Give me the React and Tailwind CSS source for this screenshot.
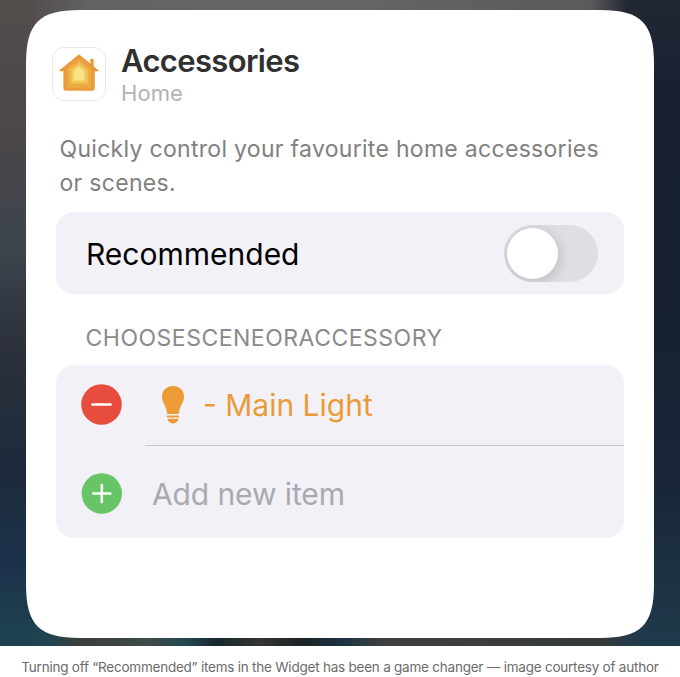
function HomeIcon() {
  return (
    <div className="flex h-[54px] w-[54px] shrink-0 items-center justify-center rounded-[12px] border border-[#e8e8ea] bg-white">
      <svg width="40" height="40" viewBox="0 0 40 40">
        <path d="M18.800 1.200Q20 0 21.200 1.200L31.300 9.500V5.800Q31.300 4.800 32.300 4.800h1.400Q34.700 4.800 34.700 5.800v6.600l4.800 3.800Q40.300 17.200 39 17.200H35.800V34Q35.800 36.800 33 36.800H7.200Q4.400 36.800 4.400 34V17.200H1Q-.3 17.200.5 16.200Z" fill="#ea9a3a" />
        <path d="M20 4.800 32 14.500V32.200Q32 33.700 30.500 33.700H9.500Q8 33.700 8 32.200V14.500Z" fill="#eeaa42" />
        <path d="M20 8 29 15.500V30H11V15.500Z" fill="#f1bd50" />
        <path d="M20 10 27 16V28H13V16Z" fill="#f3cc60" />
        <path d="M20 12.500 25 17V26.500H15V17Z" fill="#f8e484" />
      </svg>
    </div>
  );
}

function Bulb() {
  return (
    <svg width="24" height="40" viewBox="0 0 24 40" fill="#ec9b35">
      <path d="M12 1C5.500 1 1 5.500 1 11.500c0 7 4.500 9 5 16.500q.1 1 1 1h10q.9 0 1-1c.5-7.500 5-9.500 5-16.500C23 5.500 18.500 1 12 1Z" />
      <rect x="5.800" y="30.500" width="12.400" height="2" rx="1" />
      <path d="M6.500 33.800h11Q17.300 36 16 36.500 14.500 38.500 12 38.500T8 36.500Q6.700 36 6.500 33.800Z" />
    </svg>
  );
}

export default function App() {
  return (
    <div className="h-[677px] w-[680px] overflow-hidden bg-white font-['Inter','Liberation_Sans',sans-serif]">
      <div className="h-[646px] bg-[linear-gradient(#534d4b_0px,#4b4649_130px,#3c444c_250px,#2b303b_350px,#1d2a3b_470px,#1b314a_560px,#1f4351_646px),linear-gradient(#222734_0px,#171f30_100px,#16202f_300px,#182637_480px,#1f3a4c_646px),linear-gradient(90deg,#534d4b_30px,#626262_90px,#666_320px,#5a5a5a_590px,#222734_628px),linear-gradient(90deg,#1f4351_45px,#3b3f3c_80px,#3f4a4a_150px,#224852_185px,#18272a_217px,#353433_260px,#1a2224_304px,#1b3444_343px,#3f403f_385px,#353a39_600px,#1f3a4c_640px)] bg-[size:34px_646px,34px_646px,680px_323px,680px_323px] bg-[position:0_0,646px_0,0_0,0_323px] bg-no-repeat px-[26px] pt-[10px]">
        <main className="flex h-[628px] w-[628px] flex-col bg-white px-[30px] [clip-path:path('M54_0H574C615_0_628_13_628_54V574C628_615_615_628_574_628H54C13_628_0_615_0_574V54C0_13_13_0_54_0Z')]">
          <header className="-ml-1 mt-[37px] flex h-[54px] gap-[15px]">
            <HomeIcon />
            <div>
              <h1 className="mt-[-6px] text-[31px] font-semibold leading-[40px] tracking-[-0.65px] text-[#303030]">Accessories</h1>
              <p className="mt-[-1px] text-[22px] leading-[26px] tracking-[0.1px] text-[#b3b3b3]">Home</p>
            </div>
          </header>
          <p className="ml-[3.500px] mt-[31px] h-[79px] whitespace-nowrap text-[23px] leading-[34px] tracking-[0.300px] text-[#808080]">
            Quickly control your favourite home accessories<br />or scenes.
          </p>
          <section className="mt-[1px] flex h-[82px] shrink-0 items-center justify-between rounded-[18px] bg-[#f2f1f8] pl-[30px] pr-[26px]">
            <span className="mt-[2px] text-[30px] leading-[40px] text-black">Recommended</span>
            <button className="flex h-[57px] w-[94px] items-center overflow-hidden rounded-full bg-[#dfdee3] pl-[3px]">
              <span className="h-[51px] w-[51px] rounded-full bg-white shadow-[1px_3px_10px_3px_rgba(0,0,0,0.11)]" />
            </button>
          </section>
          <h2 className="ml-[29.500px] mt-[29px] text-[23px] font-normal leading-[30px] tracking-[0.500px] text-[#8a8a8c]">CHOOSESCENEORACCESSORY</h2>
          <section className="mt-[12px] h-[173px] shrink-0 rounded-[18px] bg-[#f2f1f8]">
            <div className="flex h-[80px] items-center pl-[25px]">
              <svg className="-mt-px" width="41" height="41" viewBox="0 0 41 41"><circle cx="20.500" cy="20.500" r="20.300" fill="#e74c3c" /><path d="M11.500 20.500h18" stroke="#fff" strokeWidth="2.600" strokeLinecap="round" /></svg>
              <div className="ml-[39px]"><Bulb /></div>
              <span className="ml-[18px] text-[30px] leading-[40px] text-[#ea9b35]">- Main Light</span>
            </div>
            <div className="ml-[89px] h-px bg-[#c8c7cd]" />
            <div className="flex h-[92px] items-center pl-[25px] pt-[4px]">
              <svg className="-mt-[2px]" width="41" height="41" viewBox="0 0 41 41"><circle cx="20.800" cy="20.500" r="20.200" fill="#68c567" /><path d="M12.300 20.500h17M20.800 12v17" stroke="#fff" strokeWidth="2.600" strokeLinecap="round" /></svg>
              <span className="ml-[30px] text-[30px] leading-[40px] tracking-[-0.1px] text-[#aaa9ae]">Add new item</span>
            </div>
          </section>
        </main>
      </div>
      <p className="mt-[11px] whitespace-nowrap text-center text-[13.500px] leading-[20px] tracking-[-0.225px] text-[#6b6b6b]">Turning off “Recommended” items in the Widget has been a game changer — image courtesy of author</p>
    </div>
  );
}
